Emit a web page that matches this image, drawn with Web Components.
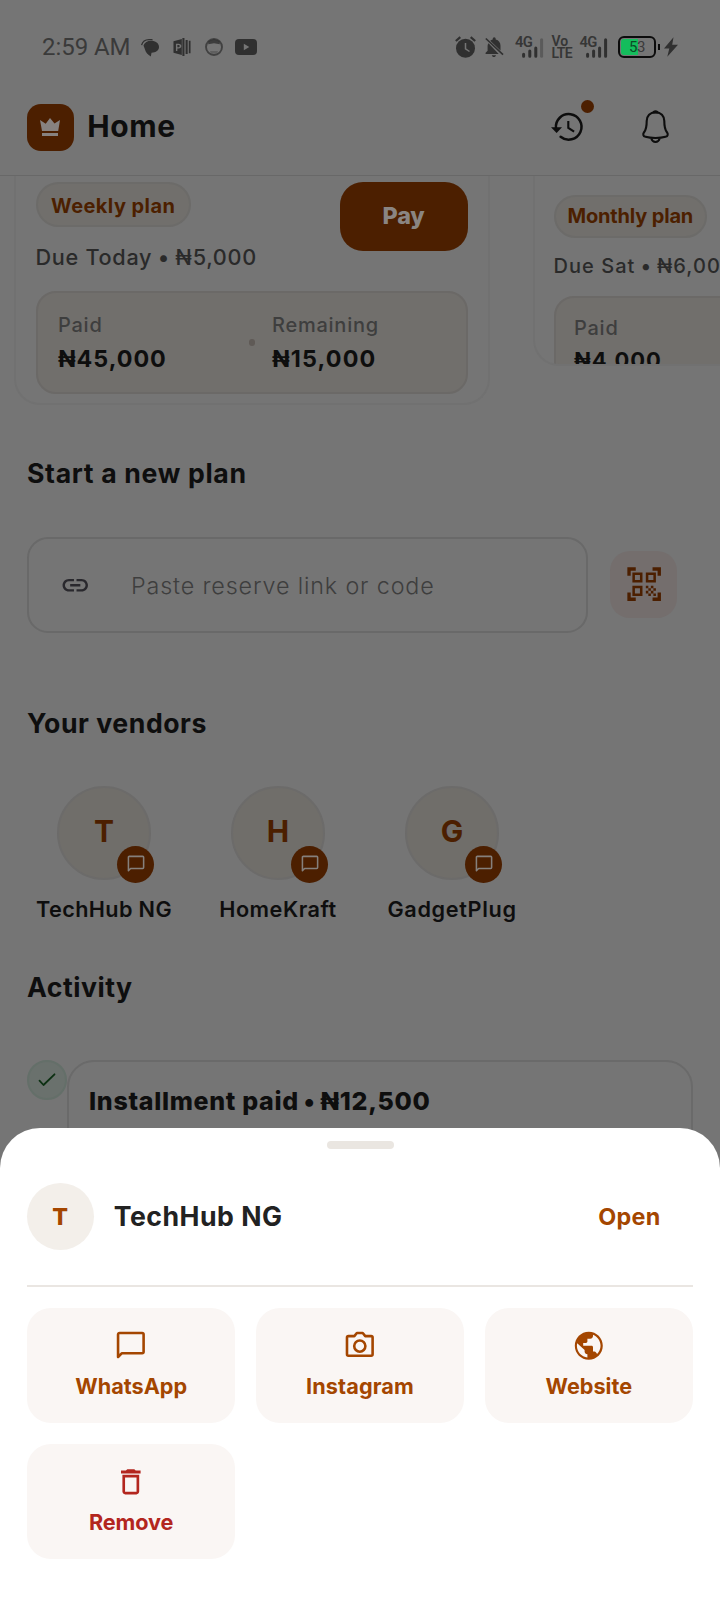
<!DOCTYPE html>
<html lang="en">
<head>
<meta charset="utf-8">
<title>Home</title>
<style>
html,body{margin:0;padding:0;background:#757575}
body{width:720px;height:1600px;overflow:hidden;font-family:Inter,"Liberation Sans",sans-serif}
</style>
</head>
<body>
<home-screen></home-screen>
<script>
class Base extends HTMLElement{
  a(n,d){return this.getAttribute(n)??d}
  connectedCallback(){
    if(this.shadowRoot)return;
    this.attachShadow({mode:'open'}).innerHTML=this.view();
  }
}
const ICONS={
  bubble:['0 0 24 24','<path fill="none" stroke="currentColor" stroke-width="1.850" stroke-linejoin="round" d="M2.900 20V3.900a1.050 1.050 0 0 1 1.050-1.050H20.100a1.050 1.050 0 0 1 1.050 1.050V16.300a1.050 1.050 0 0 1-1.050 1.050H5.500z"/>'],
  camera:['0 0 24 24','<g fill="none" stroke="currentColor" stroke-width="1.850" stroke-linejoin="round"><path d="M3.900 5.100H8.100L9.900 2.850h4.200L15.900 5.100h4.200a1.050 1.050 0 0 1 1.050 1.050V18.100a1.050 1.050 0 0 1-1.050 1.050H3.900a1.050 1.050 0 0 1-1.050-1.050V6.150A1.050 1.050 0 0 1 3.900 5.100z"/><circle cx="12" cy="12.200" r="4"/></g>'],
  globe:['0 0 24 24','<path fill="currentColor" d="M12 2C6.48 2 2 6.48 2 12s4.48 10 10 10 10-4.48 10-10S17.52 2 12 2zm-1 18.430c-4.200-.490-7.500-4.100-7.500-8.430 0-.620.080-1.210.210-1.790L9 15v1c0 1.100.900 2 2 2v2.430zm6.900-2.540c-.260-.810-1-1.890-1.900-1.890h-1v-3c0-.550-.450-1-1-1H8v-2h2c.550 0 1-.450 1-1V7h2c1.100 0 2-.900 2-2v-.910c3.100 1.190 5.400 4.400 5.400 7.910 0 2.300-1 4.400-2.500 5.890z"/>'],
  trash:['0 0 24 24','<path fill="currentColor" d="M6 19c0 1.100.900 2 2 2h8c1.100 0 2-.900 2-2V7H6v12zM7.900 8.900h8.200v10.200H7.900V8.900zm7.600-4.900l-1-1h-5l-1 1H5v2h14V4h-3.500z"/>'],
  qr:['0 0 24 24','<path fill="currentColor" d="M9.500 6.500v3h-3v-3h3M11 5H5v6h6V5zm-1.500 9.500v3h-3v-3h3M11 13H5v6h6v-6zm6.500-6.500v3h-3v-3h3M19 5h-6v6h6V5zm-6 8h1.500v1.500H13V13zm1.500 1.500H16V16h-1.500v-1.500zM16 13h1.500v1.500H16V13zm-3 3h1.500v1.500H13V16zm1.500 1.500H16V19h-1.500v-1.500zM16 16h1.500v1.500H16V16zm1.500-1.500H19V16h-1.500v-1.500zm0 3H19V19h-1.500v-1.500zM22 7h-2V4h-3V2h5v5zm0 15v-5h-2v3h-3v2h5zM2 22h5v-2H4v-3H2v5zM2 2v5h2V4h3V2H2z"/>'],
  link:['0 0 24 24','<path fill="currentColor" d="M3.900 12c0-1.710 1.390-3.100 3.100-3.100h4V7H7c-2.760 0-5 2.240-5 5s2.240 5 5 5h4v-1.900H7c-1.710 0-3.100-1.390-3.100-3.100zM8 13h8v-2H8v2zm9-6h-4v1.900h4c1.710 0 3.100 1.390 3.100 3.100s-1.390 3.100-3.100 3.100h-4V17h4c2.760 0 5-2.240 5-5s-2.240-5-5-5z"/>'],
  check:['0 0 20 16','<path fill="none" stroke="currentColor" stroke-width="1.800" stroke-linecap="round" stroke-linejoin="round" d="M2.500 8.700 6.500 13 17.500 2.300"/>'],
  crown:['0 0 20 18','<path fill="currentColor" d="M0 2 5.700 5.700 10 0l4.500 5.500L20 2l-1.800 11H2zM2 15h16v3H2z"/>'],
  history:['0 0 32 29','<g fill="none" stroke="currentColor" stroke-width="2.500" stroke-linecap="round"><path d="M5 15.500A12.800 12.800 0 1 1 9.600 23.800"/><path stroke-width="2.100" stroke-linecap="butt" d="M17.300 8v7l5.800 3.700"/></g><path fill="currentColor" d="M0 14.200h11L5.600 20z"/>'],
  bell:['0 0 27 33','<path fill="none" stroke="currentColor" stroke-width="2.100" stroke-linejoin="round" d="M13.500 2.200C8 2.200 4.700 5.800 4.700 11c0 6.800-.8 8.800-2.500 11-1.600 2-1.200 4.100 1.300 4.800 3 .9 6.500 1.200 10 1.200s7-.3 10-1.200c2.500-.7 2.900-2.800 1.300-4.800-1.700-2.200-2.500-4.200-2.500-11 0-5.200-3.300-8.800-8.800-8.800z"/><path fill="currentColor" d="M9.500 3.500C10.500 1.200 11.700.2 13.500.2s3 1 4 3.300z"/><path fill="none" stroke="currentColor" stroke-width="2" d="M9.300 28.500c.6 2.200 2.200 3.400 4.200 3.400s3.600-1.200 4.200-3.400"/>'],
  msg:['0 0 18 17','<path fill="currentColor" d="M2.500 6.500C3.500 3.500 6.500 1.800 10 1.800c4.500 0 8 2.500 8 6.200 0 3.500-3 5.500-7.500 5.700L9.800 17.500C7 15.500 4.500 13.500 4 10.500z"/><path fill="none" stroke="currentColor" stroke-width="1.300" d="M.6 6.200C1.500 2.700 4.200.8 8 .7h3.500"/>'],
  ppt:['0 0 18 19','<path fill="currentColor" fill-rule="evenodd" d="M0 3.500 8.800 1v17L0 15.500zM2.600 6v7.800h1.500V11h1.200c4 0 4-5 0-5zm1.500 1.300h1c2 0 2 2.500 0 2.500h-1z"/><path fill="currentColor" d="M9.400 0h2.200v19H9.400zM12.800 2h2.200v15h-2.200zM16.200 3h1.800v13h-1.800z"/>'],
  face:['0 0 18 18','<circle cx="9" cy="9" r="8" fill="none" stroke="currentColor" stroke-width="1.900" opacity=".75"/><path fill="currentColor" d="M3.500 3 9 1l5.500 2 .3 3.200L9 5.300l-5.800.9z" opacity=".8"/><path fill="currentColor" d="M5 13h8l-1 2.500H6z" opacity=".3"/>'],
  tube:['0 0 22 16','<rect width="22" height="16" rx="4" fill="currentColor"/><path fill="#757575" d="M8.800 4.700v6.600l5.500-3.300z"/>'],
  alarm:['0 0 21 22','<path fill="none" stroke="currentColor" stroke-width="2.200" d="M.8 5 5.300 1.200M20.200 5l-4.500-3.800"/><circle cx="10.500" cy="12.300" r="9.500" fill="currentColor"/><path fill="none" stroke="#757575" stroke-width="1.500" d="M10.500 7v5.800l4 2.700"/>'],
  mute:['0 0 19 21','<path fill="currentColor" d="M7.700 2.500V1.700a1.500 1.500 0 0 1 3 0v.8c3 .7 4.800 3.100 4.800 6.300v4.800L5.200 3.700c.8-.6 1.600-1 2.500-1.200zM3.500 6.300 13.700 17H.6v-1.300l2-2V8.800c0-.9.3-1.800.9-2.500zM6.800 18.300h4.200c-.3 2.400-3.900 2.400-4.200 0z"/><path stroke="currentColor" stroke-width="1.600" d="M.8 1.500 18 17.700"/>'],
  bars3:['0 0 22 20','<path fill="none" stroke="currentColor" stroke-width="3" stroke-linecap="round" d="M1.600 16.200v2M7.800 13v5.200M13.800 10v8.200"/><path stroke="#5a5a5a" stroke-width="3" stroke-linecap="round" d="M19.600 1.800v16.400"/>'],
  bars4:['0 0 22 20','<path fill="none" stroke="currentColor" stroke-width="3" stroke-linecap="round" d="M1.600 16.200v2M7.600 13v5.200M13.600 10v8.200M19.600 1.800v16.400"/>'],
  bolt:['0 0 14 20','<path fill="currentColor" d="M9.500.2 0 11.500h5.300L3.300 19.800 14 7.800H8.200z"/>']
};
customElements.define('ui-icon',class extends Base{view(){
  const [v,p]=ICONS[this.a('name')],w=this.a('w',24),h=this.a('h',w);
  return `<style>:host{display:block;flex:none;width:${w}px;height:${h}px}svg{display:block;overflow:visible}</style><svg width="${w}" height="${h}" viewBox="${v}">${p}</svg>`}});
/* One line of text; capital letters are centred in the line box of height h. */
customElements.define('ui-text',class extends Base{view(){
  return `<style>:host{display:block;flex:none;white-space:nowrap;font-size:${this.a('s')}px;font-weight:${this.a('wt',600)};letter-spacing:${this.a('ls',0)}px;line-height:${this.a('h',26)}px;color:${this.a('c','#0e0e0e')}}::slotted(i){font-style:normal;margin:0 ${this.a('dot',-1)}px}</style><slot></slot>`}});

customElements.define('status-bar',class extends Base{view(){return `<style>
:host{display:flex;justify-content:space-between;box-sizing:border-box;height:79px;padding:31px 42px 0 42px;color:#303030}
.l,.r{display:flex;align-items:center;height:32px}
.time{font:400 24px/32px Roboto,sans-serif;letter-spacing:-.05px;color:#3a3a3a;width:100px;white-space:nowrap}
.sig{display:grid;width:28.500px;height:22px}
.sig>*{grid-area:1/1}.sig span{font:600 14.800px/12px Roboto,sans-serif;letter-spacing:-.6px;color:#363636}
.sig ui-icon{align-self:end;justify-self:end}
.vo{font:600 14px/12px Roboto,sans-serif;width:20px;color:#363636}
.vo div{height:12px;margin-top:-.5px}.vo div+div{letter-spacing:-.6px;margin-top:.2px}
.bat{box-sizing:border-box;width:38px;height:22px;border:2px solid #0c0c0c;border-radius:6px;padding:1px;display:flex;font:400 15px/17px Roboto,sans-serif}
.bat div{flex:1;border-radius:3px;display:flex;justify-content:center;color:#3a3a3a;letter-spacing:-.5px;background:linear-gradient(90deg,#14bd5c 17.500px,transparent 17.500px)}
.bat b{font-weight:400;color:#0c4a27}
.nub{width:2px;height:6px;background:#0c0c0c;margin:0 4px 0 2px}
</style>
<div class="l"><div class="time">2:59 AM</div>
<ui-icon name="msg" w="18" h="17" style="margin:0 14px 0 -1px"></ui-icon><ui-icon name="ppt" w="18" h="18" style="margin-right:14px"></ui-icon><ui-icon name="face" w="18" style="margin-right:12px"></ui-icon><ui-icon name="tube" w="22" h="16"></ui-icon></div>
<div class="r"><ui-icon name="alarm" w="21" h="22" style="margin-right:9px"></ui-icon><ui-icon name="mute" w="19" h="21" style="margin-right:11.500px"></ui-icon>
<div class="sig"><span>4G</span><ui-icon name="bars3" w="22" h="20"></ui-icon></div>
<div class="vo" style="margin:0 8px"><div>Vo</div><div>LTE</div></div>
<div class="sig" style="margin-right:10px"><span>4G</span><ui-icon name="bars4" w="22" h="20"></ui-icon></div>
<div class="bat"><div><b>5</b>3</div></div><div class="nub"></div><ui-icon name="bolt" w="14" h="20"></ui-icon></div>`}});

customElements.define('app-header',class extends Base{view(){return `<style>
:host{display:flex;box-sizing:border-box;height:97px;align-items:flex-start;padding:24.600px 51px 0 27px;border-bottom:1px solid #686868}
.logo{width:47px;height:47px;border-radius:14px;background:#4c1f00;color:#878280;display:flex;align-items:center;justify-content:center;margin-right:13.300px}
.logo ui-icon{margin-left:-1px}
.sp{flex:1}
.hist{position:relative;margin:9.200px 59.500px 0 0;color:#0d0d0d}
.hist i{position:absolute;left:30.300px;top:-13.200px;width:13.500px;height:13.500px;border-radius:50%;background:#4c1f00}
.bell{color:#0d0d0d;margin-top:6.700px}
</style>
<div class="logo"><ui-icon name="crown" w="20" h="18"></ui-icon></div>
<ui-text s="30" wt="700" ls=".6" h="44">Home</ui-text><div class="sp"></div>
<div class="hist"><ui-icon name="history" w="32" h="29"></ui-icon><i></i></div>
<div class="bell"><ui-icon name="bell" w="27" h="33"></ui-icon></div>`}});

customElements.define('plan-card',class extends Base{view(){return `<style>
:host{display:block;flex:none;box-sizing:border-box;border:2px solid #717171;border-top:0;border-radius:0 0 26px 26px;overflow:hidden}
</style><slot></slot>`}});
customElements.define('plan-pill',class extends Base{view(){return `<style>
:host{display:flex;flex:none;box-sizing:border-box;border:2px solid #6c6b69;border-radius:24px;background:#716f6c;width:max-content}
</style><slot></slot>`}});
customElements.define('stat-item',class extends Base{view(){return `<style>:host{display:block}</style>
<ui-text s="20" wt="500" ls=".75" h="${this.a('h1')}" c="#3e3e3e">${this.a('label')}</ui-text>
<ui-text s="${this.a('v')}" wt="700" ls="${this.a('ls')}" h="${this.a('h2')}"><slot></slot></ui-text>`}});

customElements.define('plan-strip',class extends Base{view(){return `<style>
:host{display:flex;height:229px;overflow:hidden;align-items:flex-start;padding-left:14px}
.one{width:476px;height:229px;margin-right:42.500px}
.two{width:440px;height:190px}
.p1{padding:6px 20.500px 0 20px}
.top{display:flex;justify-content:space-between;align-items:flex-start;height:108.500px}
.pay{background:#4c1f00;border-radius:23px;width:128px;height:68.500px;display:flex;justify-content:center;align-items:center}
.stats{display:flex;box-sizing:border-box;border:2px solid #6b6967;background:#716f6c;border-radius:20px}
.dot{width:6.500px;height:6.500px;border-radius:50%;background:#5f5a56}
.p2{padding:19px 0 0 19px}
</style>
<plan-card class="one"><div class="p1"><div class="top"><div>
<plan-pill style="height:45px;padding:2px 13.700px 0 13px;align-items:center"><ui-text s="20" wt="700" ls=".42" c="#4c1f00">Weekly plan</ui-text></plan-pill>
<ui-text s="21.670" wt="500" ls=".69" h="26" c="#2a2a2a" style="margin-top:16.500px;margin-left:-.5px">Due Today <i>•</i> ₦5,000</ui-text></div>
<div class="pay"><ui-text s="23.330" wt="800" ls="-.2" c="#8a8582">Pay</ui-text></div></div>
<div class="stats" style="height:103px;padding:19.500px 0 0 20px">
<stat-item style="width:190.500px" label="Paid" v="23.330" ls=".95" h1="26" h2="41">₦45,000</stat-item>
<div class="dot" style="margin:27px 17px 0 0"></div>
<stat-item label="Remaining" v="23.330" ls="1.150" h1="26" h2="41">₦15,000</stat-item></div></div></plan-card>
<plan-card class="two"><div class="p2">
<plan-pill style="height:42.500px;padding:0 11.500px 0 12px;align-items:center"><ui-text s="20" wt="700" ls="-.17" c="#4c1f00">Monthly plan</ui-text></plan-pill>
<ui-text s="20" wt="500" ls="1.050" h="26" c="#2a2a2a" style="margin-top:15.500px;margin-left:0" dot="-1.500">Due Sat <i>•</i> ₦6,000</ui-text>
<div class="stats" style="height:103px;padding:16.500px 0 0 18.500px;margin-top:17px">
<stat-item label="Paid" v="22" ls=".97" h1="26" h2="39">₦4,000</stat-item></div></div></plan-card>`}});

customElements.define('reserve-row',class extends Base{view(){return `<style>
:host{display:flex;align-items:center;padding-left:27px;height:96px}
.in{box-sizing:border-box;width:560.500px;height:96px;border:2px solid #696969;border-radius:21px;display:flex;align-items:center;padding-left:31px;margin-right:22.500px;color:#29282d}
.in ui-text{margin:1px 0 0 40.500px}
.qr{width:67px;height:67px;border-radius:20px;background:#746e6d;color:#4c1f00;display:flex;align-items:center;justify-content:center;margin-top:-1px}
.qr ui-icon{margin-left:1px}
</style>
<div class="in"><ui-icon name="link" w="30.500"></ui-icon><ui-text s="23.330" wt="300" ls=".85" c="#3e3e3e">Paste reserve link or code</ui-text></div>
<div class="qr"><ui-icon name="qr" w="40.300"></ui-icon></div>`}});

customElements.define('vendor-chip',class extends Base{view(){return `<style>
:host{display:flex;flex-direction:column;align-items:center;width:174px}
.av{position:relative;box-sizing:border-box;width:94px;height:94px;border-radius:50%;border:2px solid #6c6b6a;background:#706e6a;display:flex;align-items:center;justify-content:center;margin-bottom:16.500px}
.av>ui-text{margin-top:-3px}
.badge{position:absolute;left:58px;top:58px;width:37px;height:37px;border-radius:50%;background:#4c1f00;color:#85807c;display:flex;align-items:center;justify-content:center}
</style>
<div class="av"><ui-text s="30" wt="700" c="#4c1f00">${this.a('initial')}</ui-text><div class="badge"><ui-icon name="bubble" w="20"></ui-icon></div></div>
<ui-text s="21.670" wt="600" ls="${this.a('ls')}"><slot></slot></ui-text>`}});

customElements.define('activity-row',class extends Base{view(){return `<style>
:host{display:flex;padding-left:27px}
.ok{box-sizing:border-box;width:40px;height:40px;border-radius:50%;border:2px solid #646f69;background:#6a716d;color:#0c3012;display:flex;align-items:center;justify-content:center}
.card{box-sizing:border-box;width:626px;height:140px;border:2px solid #6a6a6a;border-radius:27px;padding:26px 0 0 20px}
</style><div class="ok"><ui-icon name="check" w="20" h="16"></ui-icon></div>
<div class="card"><ui-text s="25" wt="800" ls=".68" dot="-1.200">Installment paid <i>•</i> ₦12,500</ui-text></div>`}});

customElements.define('action-tile',class extends Base{view(){return `<style>
:host{display:flex;flex-direction:column;align-items:center;box-sizing:border-box;height:115px;border-radius:24px;background:#faf6f4;padding-top:21.200px;color:${this.a('c','#a44600')}}
ui-text{margin-top:11.700px}
</style><ui-icon name="${this.a('icon')}" w="33.600"></ui-icon><ui-text s="21.670" wt="700" ls="${this.a('ls')}" h="24" c="${this.a('c','#a44600')}"><slot></slot></ui-text>`}});

customElements.define('vendor-sheet',class extends Base{view(){return `<style>
:host{display:block;box-sizing:border-box;height:472.300px;background:#fff;border-radius:40px 40px 0 0;padding:13.300px 27px 0}
.grab{width:67px;height:7.500px;border-radius:4px;background:#eae6e1;margin:0 auto 34.500px}
.who{display:flex;align-items:center;height:67.500px}
.av{width:67px;height:67px;border-radius:50%;background:#f3efea;display:flex;align-items:center;justify-content:center;margin-right:19.700px}
.av ui-text{margin:.5px 0 0 -.5px}
.name{margin-top:-1.500px}
.open{margin-left:auto;margin-right:32.500px}
hr{margin:34.700px 0 20.500px;border:0;height:2.300px;background:#eae6e2}
.grid{display:grid;grid-template-columns:repeat(3,1fr);gap:20.700px 20.500px;width:666px}
</style>
<div class="grab"></div>
<div class="who"><div class="av"><ui-text s="23.330" wt="800" c="#a44600">T</ui-text></div>
<ui-text class="name" s="26.670" wt="700" ls=".5" c="#222">TechHub NG</ui-text>
<ui-text class="open" s="23.330" wt="700" ls=".3" c="#a44600">Open</ui-text></div>
<hr>
<div class="grid"><action-tile icon="bubble" ls="0">WhatsApp</action-tile><action-tile icon="camera" ls=".1">Instagram</action-tile><action-tile icon="globe" ls="0">Website</action-tile><action-tile icon="trash" ls="-.1" c="#b3261e">Remove</action-tile></div>`}});

customElements.define('home-screen',class extends Base{view(){return `<style>
:host{display:block;position:relative;width:720px;height:1600px;overflow:hidden;background:#757575}
.t{margin-left:27px}
.v{display:flex;margin:47.500px 0 0 17px}
vendor-sheet{position:absolute;left:0;right:0;bottom:0}
</style>
<status-bar></status-bar><app-header></app-header><plan-strip></plan-strip>
<ui-text class="t" s="26.670" wt="700" ls=".65" h="30" style="margin-top:53px">Start a new plan</ui-text>
<reserve-row style="margin-top:49px"></reserve-row>
<ui-text class="t" s="26.670" wt="700" ls=".53" h="30" style="margin-top:75px">Your vendors</ui-text>
<div class="v"><vendor-chip initial="T" ls=".36">TechHub NG</vendor-chip><vendor-chip initial="H" ls=".5">HomeKraft</vendor-chip><vendor-chip initial="G" ls=".65">GadgetPlug</vendor-chip></div>
<ui-text class="t" s="26.670" wt="700" ls=".5" h="30" style="margin-top:50px">Activity</ui-text>
<activity-row style="margin-top:58px"></activity-row>
<vendor-sheet></vendor-sheet>`}});
</script>
</body>
</html>
